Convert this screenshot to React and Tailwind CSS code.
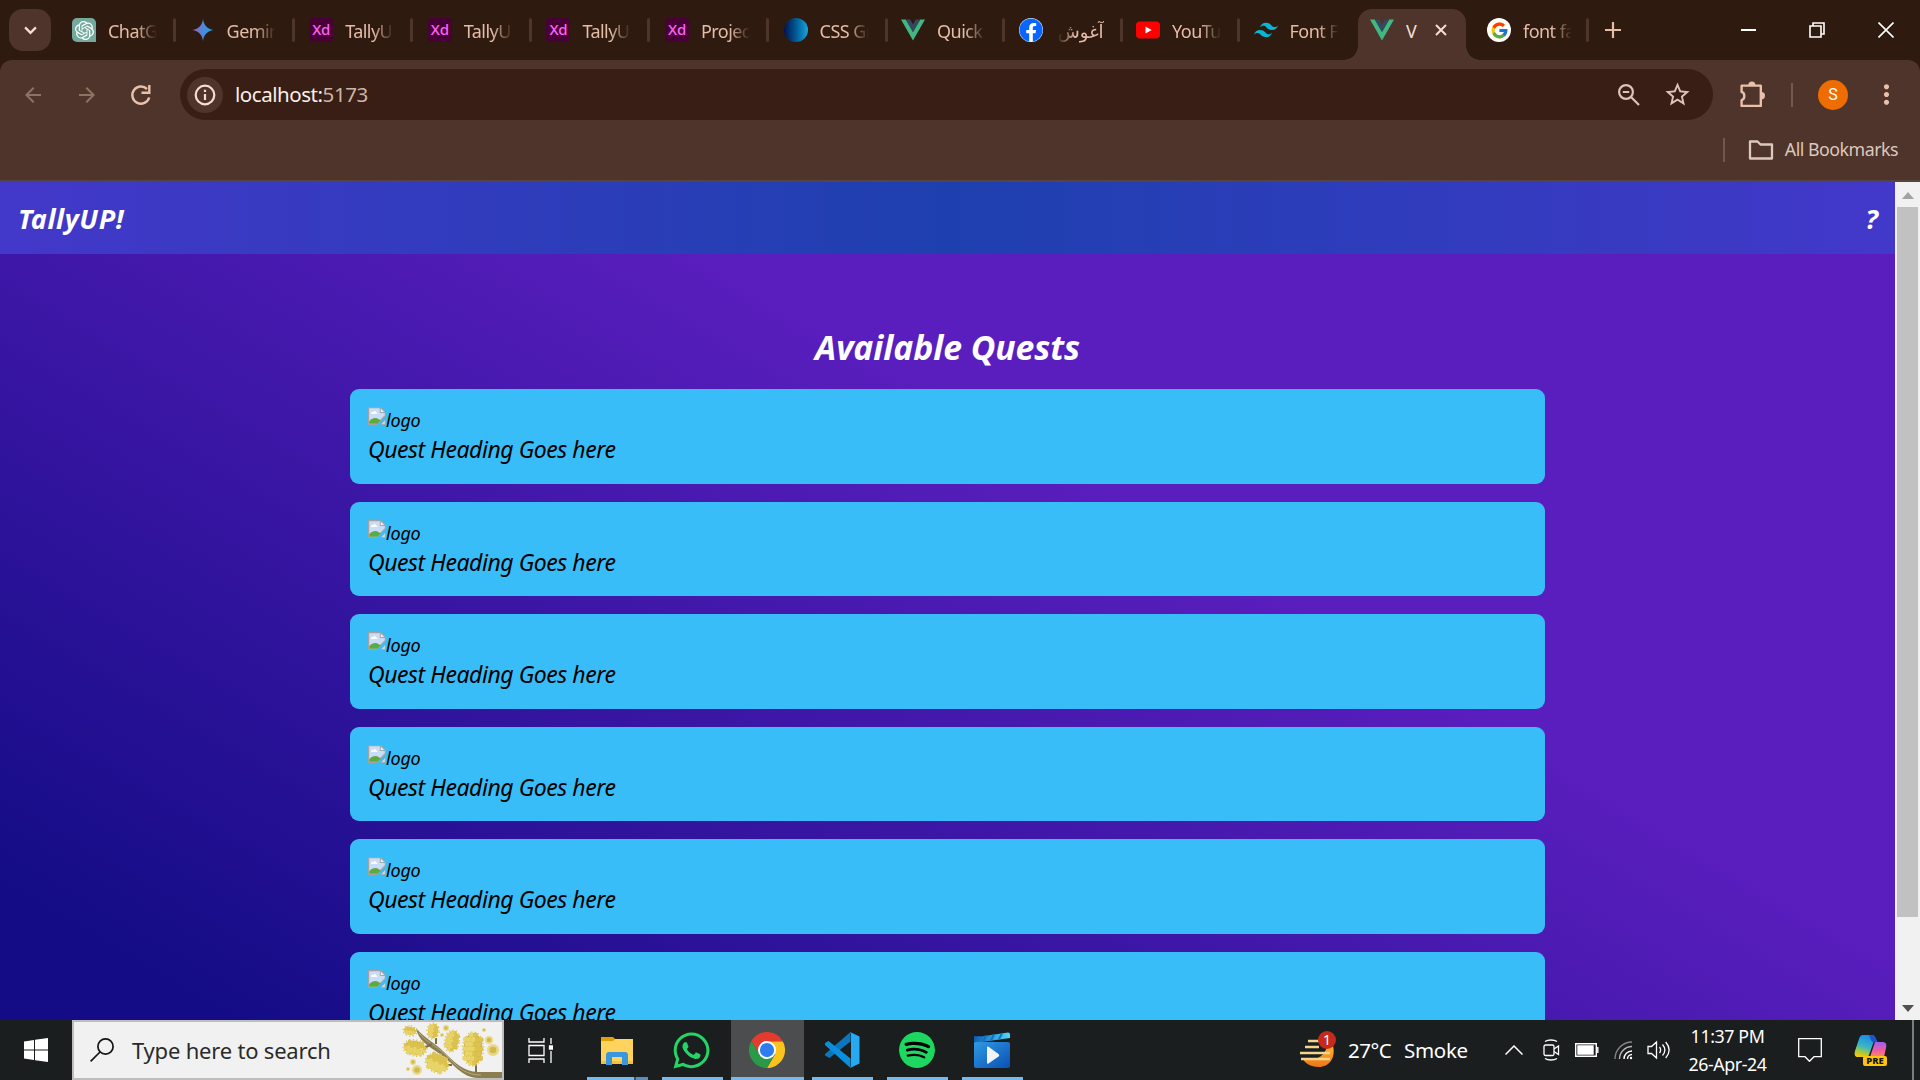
import React from "react";
import { MdArrowBack, MdArrowForward, MdStarBorder, MdMoreVert } from "react-icons/md";
import { SiOpenai, SiTailwindcss, SiSpotify } from "react-icons/si";
import { FaWhatsapp, FaFacebook } from "react-icons/fa";
import { FcGoogle } from "react-icons/fc";

const Vue = () => (
  <svg viewBox="0 0 24 24" className="size-6">
    <path fill="#41b883" d="M0 1.6h4.8L12 14 19.200 1.6H24L12 22.400z" />
    <path fill="#35495e" d="M4.800 1.600h4.400L12 6.400l2.800-4.800h4.400L12 14z" />
  </svg>
);

const Xd = () => (
  <span className="grid size-6 place-items-center rounded-[4px] bg-[#470137] pb-px font-['Noto_Sans'] text-[15px] leading-none font-medium tracking-[-0.300px] text-[#ff61f6]">
    Xd
  </span>
);

const Gemini = () => (
  <svg viewBox="0 0 24 24" className="size-6">
    <defs>
      <linearGradient id="gem" x1="0" x2="1">
        <stop offset="0.1" stopColor="#9168c0" />
        <stop offset="0.5" stopColor="#4d88dc" />
        <stop offset="0.9" stopColor="#1ba1e3" />
      </linearGradient>
    </defs>
    <path fill="url(#gem)" d="M12 1c.8 6.200 4.500 10.200 10.500 11-6 .8-9.700 4.800-10.500 11-.8-6.200-4.500-10.200-10.500-11C7.500 11.200 11.200 7.200 12 1z" />
  </svg>
);

const YouTube = () => (
  <svg viewBox="0 0 24 24" className="size-6">
    <rect y="3.500" width="24" height="17" rx="4" fill="#f00" />
    <path fill="#fff" d="M9.500 8.500v7l6.200-3.500z" />
  </svg>
);

const tabs = [
  { label: "ChatGPT", icon: <span className="grid size-6 place-items-center rounded-[5px] rounded-br-none bg-[#74aa9c]"><SiOpenai className="size-[19px] text-white" /></span> },
  { label: "Gemini", icon: <Gemini /> },
  { label: "TallyUP", icon: <Xd /> },
  { label: "TallyUP", icon: <Xd /> },
  { label: "TallyUP", icon: <Xd /> },
  { label: "Project", icon: <Xd /> },
  { label: "CSS Gr", icon: <span className="size-6 rounded-full bg-linear-to-r from-[#04114f] to-[#1aa6dc]" /> },
  { label: "Quick S", icon: <Vue /> },
  { label: "آغوش را", rtl: true, icon: <span className="grid size-6 place-items-center rounded-full bg-white"><FaFacebook className="size-6 text-[#0866ff]" /></span> },
  { label: "YouTube", icon: <YouTube /> },
  { label: "Font Fa", icon: <SiTailwindcss className="size-6 text-[#06b6d4]" />, last: true },
];

const TabLabel = ({ children, rtl }) => (
  <span
    dir={rtl ? "rtl" : "ltr"}
    className={
      rtl
        ? "mt-[2px] ml-[14px] w-[47px] overflow-hidden text-[18px] leading-[30px] whitespace-nowrap [mask-image:linear-gradient(to_left,black_60%,transparent)]"
        : "mt-[2px] ml-3 w-[49px] overflow-hidden text-[18px] leading-[30px] tracking-[-0.55px] whitespace-nowrap [mask-image:linear-gradient(to_right,black_58%,transparent)]"
    }
  >
    {children}
  </span>
);

const TabStrip = () => (
  <div className="flex h-[60px] shrink-0 items-start bg-[#2f1a0f] pl-[9px] text-[#e4bda8]">
    <div className="mt-[9px] mr-[21px] grid h-[42px] w-[42px] shrink-0 place-items-center rounded-[14px] bg-[#4e342a]">
      <svg viewBox="0 0 14 10" className="h-[9px] w-[13px]" fill="none" stroke="#f3ded4" strokeWidth="2.600"><path d="M1 1.500l6 6 6-6" /></svg>
    </div>
    {tabs.map((t, i) => (
      <div key={i} className={i < 6 ? "flex h-[60px] w-[118.600px] shrink-0 items-center" : "flex h-[60px] w-[117.500px] shrink-0 items-center"}>
        {t.icon}
        <TabLabel rtl={t.rtl}>{t.label}</TabLabel>
        {!t.last && <span className="ml-4 h-6 w-[3px] rounded bg-[#4e342a]" />}
      </div>
    ))}
    <div className="relative -ml-[13px] mt-[9px] flex h-[51px] w-[108px] shrink-0 items-center rounded-t-[14px] bg-[#4e342a] pb-[9px] pl-3 text-[#f3ded4] before:absolute before:bottom-0 before:-left-[14px] before:size-[14px] before:bg-[radial-gradient(circle_at_0_0,transparent_13.500px,#4e342a_14px)] after:absolute after:-right-[14px] after:bottom-0 after:size-[14px] after:bg-[radial-gradient(circle_at_100%_0,transparent_13.500px,#4e342a_14px)]">
      <Vue />
      <span className="mt-[2px] ml-3 w-7 text-[18px] leading-[30px]">V</span>
      <svg viewBox="0 0 12 12" className="ml-[1px] size-3" stroke="#f3ded4" strokeWidth="2"><path d="M1 1l10 10M11 1L1 11" /></svg>
    </div>
    <div className="ml-[21px] flex h-[60px] items-center">
      <span className="grid size-6 place-items-center rounded-full bg-white"><FcGoogle className="size-[19px]" /></span>
      <TabLabel>font fam</TabLabel>
      <span className="ml-[14px] h-6 w-[3px] rounded bg-[#4e342a]" />
      <svg viewBox="0 0 16 16" className="ml-4 size-4" stroke="#e4bda8" strokeWidth="2.200"><path d="M8 0v16M0 8h16" /></svg>
    </div>
    <div className="mr-[26px] ml-auto flex h-[59px] items-center gap-[53px]">
      <span className="h-[2px] w-[15px] bg-white" />
      <svg viewBox="0 0 16 16" className="size-4" fill="none" stroke="#fff" strokeWidth="1.600"><path d="M1 4h11v11H1zM4 4V1h11v11h-3" /></svg>
      <svg viewBox="0 0 16 16" className="size-4" stroke="#fff" strokeWidth="1.600"><path d="M.5.5l15 15M15.500.5l-15 15" /></svg>
    </div>
  </div>
);

const Toolbar = () => (
  <div className="bg-[#2f1a0f]">
    <div className="flex h-[120px] flex-col rounded-t-[12px] bg-[#4e342a]">
      <div className="mt-[9px] flex h-[51px] items-center pl-[21px]">
        <MdArrowBack className="size-6 text-[#8f7266]" />
        <MdArrowForward className="ml-[30px] size-6 text-[#8f7266]" />
        <svg viewBox="0 0 24 24" className="ml-[30px] size-6" fill="none" stroke="#e9c0ab" strokeWidth="2.500">
          <path d="M20.200 14.500A8.600 8.600 0 1 1 18 6" /><path fill="#e9c0ab" stroke="none" d="M21.500 2v9h-9v-2.400h6.600V2z" />
        </svg>
        <div className="ml-[27px] flex h-[51px] w-[1533px] items-center rounded-full bg-[#381e14] pl-2">
          <span className="-ml-px grid size-9 place-items-center rounded-full bg-[#4e342a]">
            <svg viewBox="0 0 22 22" className="size-[22px]" fill="none" stroke="#f3ded4" strokeWidth="2.200"><circle cx="11" cy="11" r="9.300" /><path d="M11 10v6M11 5.800v2.300" /></svg>
          </span>
          <span className="ml-3 text-[20.500px] tracking-[-0.450px] text-[#fbeee8]">localhost:<span className="text-[#cdb5a5]">5173</span></span>
          <svg viewBox="0 0 24 24" className="mr-[22px] ml-auto size-6" fill="none" stroke="#dcc3b8" strokeWidth="2.200"><circle cx="9" cy="9" r="6.900" /><path d="M14 14l8 8M5.800 9h6.400" /></svg>
          <MdStarBorder className="mr-[21px] size-[29px] text-[#dcc3b8]" />
        </div>
        <svg viewBox="0 0 26 26" className="ml-[26px] size-[27px]" fill="none" stroke="#e9c0ab" strokeWidth="2.300" strokeLinejoin="round">
          <path d="M2.500 4.500H21V24H2.500V18.500C6 17.500 6 11.500 2.500 10.500z" />
          <path fill="#e9c0ab" stroke="none" d="M9 4a3.400 3.400 0 0 1 6.800 0zM21.500 10.600a3.500 3.500 0 0 1 0 7z" />
        </svg>
        <span className="ml-[25px] h-6 w-[2px] bg-[#76574b]" />
        <span className="ml-[25px] grid size-[30px] place-items-center rounded-full bg-[#ef6c00] font-[Roboto] text-[16px] text-white">S</span>
        <MdMoreVert className="ml-[23px] size-[31px] text-[#e9c0ab]" />
      </div>
      <div className="flex h-[60px] items-center justify-end pr-[22px]">
        <span className="h-6 w-[2px] bg-[#76574b]" />
        <svg viewBox="0 0 26 20" className="ml-[23px] h-5 w-[26px]" fill="none" stroke="#dcc8be" strokeWidth="2.300" strokeLinejoin="round"><path d="M2 1.500h7.500l3 3H24V18.500H2z" /></svg>
        <span className="-mt-px ml-[11px] text-[17.800px] tracking-[-0.500px] text-[#dcc8be]">All Bookmarks</span>
      </div>
    </div>
    <div className="h-[2px] bg-[#56443d]" />
  </div>
);

const BrokenImage = () => (
  <svg viewBox="0 0 18 18" className="size-[18px]">
    <path fill="#c9dcf8" stroke="#a3a3a3" strokeWidth="1.200" d="M.6.6h11.900l4.900 4.900v3L8.500 17.400H.6z" />
    <path fill="#fff" d="M3 6.500c0-1.500 1.500-2 2.200-1.400C6 3.200 8.400 4 8.300 5.600c1.200 0 1.200 1.300.4 1.400H3.300z" />
    <path fill="#5bab3f" d="M1.200 16.800v-2.500C4 11 8 10 10.800 12.200l2 1L9 16.800z" />
    <path fill="#f5f5f5" stroke="#a3a3a3" d="M12.300.8v4.700h4.900z" />
    <path fill="#d5d9e2" stroke="#a3a3a3" strokeWidth=".8" d="M17.300 12.500v4.900h-4.500z" />
  </svg>
);

const Page = () => (
  <div className="flex h-[838px] shrink-0 overflow-hidden italic">
    <div className="flex w-[1895px] flex-col">
      <header className="flex h-[72px] shrink-0 items-center justify-between bg-[linear-gradient(to_right,#4338ca,#1e40af,#4338ca)] pt-[2px] pr-[17px] pl-[18px] text-[27px] font-bold text-white">
        <h1 className="tracking-[0.600px]">TallyUP!</h1>
        <span>?</span>
      </header>
      <main className="flex h-[766px] flex-col items-center overflow-hidden bg-[linear-gradient(30.500deg,#140c86_7.300%,#5a1ebe_63.400%)] pt-[70px]">
        <h2 className="h-[65px] shrink-0 text-[33.750px] leading-[46px] font-bold tracking-[-0.070px] whitespace-nowrap text-white">Available Quests</h2>
        <ul className="flex w-[1195px] flex-col gap-[18.100px]">
          {[1, 2, 3, 4, 5, 6].map((n) => (
            <li key={n} className="h-[94.500px] shrink-0 rounded-[9px] bg-[#38bdf8] px-[18px] pt-[18px] text-black">
              <div className="flex h-[27px] items-start">
                <BrokenImage />
                <span className="text-[18px] leading-[27px] tracking-[-0.200px]">logo</span>
              </div>
              <p className="text-[23px] leading-[31px] tracking-[-0.450px]">Quest Heading Goes here</p>
            </li>
          ))}
        </ul>
      </main>
    </div>
    <div className="flex w-[25px] flex-col items-center bg-[#f1f1f1]">
      <svg viewBox="0 0 12 7" className="mt-[10px] mb-2 h-[7px] w-3 shrink-0" fill="#a3a3a3"><path d="M0 7l6-7 6 7z" /></svg>
      <div className="h-[710px] w-[21px] bg-[#c1c1c1]" />
      <svg viewBox="0 0 12 7" className="mt-[88px] h-[7px] w-3 shrink-0" fill="#505050"><path d="M0 0l6 7 6-7z" /></svg>
    </div>
  </div>
);

const Cluster = ({ x, y, rx, ry, rot = 0 }) => {
  const dots = [];
  for (let r = -3; r <= 3; r++)
    for (let c = -2; c <= 2; c++) {
      const u = (c + (r % 2 ? 0.5 : 0)) / 2.4, v = r / 3.4;
      if (u * u + v * v < 1.05) dots.push([u * rx, v * ry]);
    }
  return (
    <g transform={`translate(${x} ${y}) rotate(${rot})`}>
      <ellipse rx={rx} ry={ry} fill="#d0b440" />
      <ellipse rx={rx + 1} ry={ry + 1} fill="none" stroke="#d8bd4c" strokeDasharray="1 2.500" strokeWidth="1.500" />
      {dots.map(([a, b], i) => <circle key={i} cx={a} cy={b} r={rx / 3.8} fill={a > 0 ? "#dcc24e" : "#e8d468"} />)}
    </g>
  );
};

const Branch = () => (
  <svg viewBox="0 0 104 56" className="h-14 w-[104px] self-end">
    <g transform="translate(4 0)">
      <path d="M14 6c2 12 12 18 24 26s22 24 38 24h28v-6H76C62 50 52 40 42 30S22 16 14 6z" fill="#8c7d50" />
      <path d="M17 11c8 10 20 14 30 25s18 17 32 17" stroke="#b8ab7c" fill="none" />
      <path d="M30 22l-8 4M34 16v6M48 28l3-6M50 43l-10 0M74 50v-8M14 10l-6-3" stroke="#7d6d45" strokeWidth="2" />
      <Cluster x={8} y={9} rx={4} ry={6} rot={-80} />
      <Cluster x={31} y={9} rx={5} ry={7} rot={8} />
      <Cluster x={13} y={26} rx={7} ry={11} rot={-80} />
      <Cluster x={50} y={19} rx={6.500} ry={10} rot={12} />
      <Cluster x={35} y={41} rx={8.500} ry={11} rot={-65} />
      <Cluster x={71} y={27} rx={9.500} ry={16} rot={2} />
      {[[44, 6, 3], [82, 8, 2], [87, 18, 4], [91, 28, 6], [11, 40, 3], [15, 48, 5], [6, 47, 2], [40, 13, 2]].map(([x, y, r], i) => (
        <g key={i}><circle cx={x} cy={y} r={r} fill="#e8d88a" /><circle cx={x} cy={y} r={r * 0.55} fill="#d3b94a" /></g>
      ))}
    </g>
  </svg>
);

const Explorer = () => (
  <svg viewBox="0 0 36 36" className="size-9">
    <path fill="#e0a008" d="M2 5h12l2 2v4H2z" /><path fill="#ffd35c" d="M2 9h12l2-2h18v25H2z" /><path fill="#f7bf3a" d="M2 29h32v3H2z" />
    <path fill="#3a96dd" d="M10 20h16a3 3 0 0 1 3 3v10h-6v-8H13v8H7V23a3 3 0 0 1 3-3z" />
  </svg>
);
const Chrome = () => (
  <svg viewBox="0 0 48 48" className="size-9">
    <path fill="#e33b2e" d="M3.200 12L14 30 24 12.500h21.100L44.800 12A24 24 0 0 0 3.200 12z" />
    <path fill="#fcc31e" d="M24 12.500h21.100A24 24 0 0 1 24 48l10.500-18z" />
    <path fill="#2a9a48" d="M3.200 12A24 24 0 0 0 24 48l10.400-18H14z" />
    <circle cx="24" cy="24" r="12" fill="#fff" /><circle cx="24" cy="24" r="9.500" fill="#2f7cf0" />
  </svg>
);
const VsCode = () => (
  <svg viewBox="0 0 36 36" className="size-9">
    <path fill="#0b76bd" d="M26.500 0v9.500L5.500 26 1 23.500V22z" />
    <path fill="#0b8fdd" d="M4.500 9L1 11v2l25.500 23V26.500z" />
    <path fill="#27a9f2" d="M26 0l9.500 4.500v27L26 36l1-1.500v-33z" />
  </svg>
);
const Movies = () => (
  <svg viewBox="0 0 36 36" className="size-9">
    <defs>
      <linearGradient id="mv" x1="0" y1="0" x2="1" y2="1"><stop offset="0" stopColor="#2f9be4" /><stop offset="1" stopColor="#0a50b4" /></linearGradient>
      <linearGradient id="mt" x1="0" x2="1"><stop offset="0" stopColor="#0f5fb5" /><stop offset="1" stopColor="#50d8ff" /></linearGradient>
    </defs>
    <path fill="#0d55a8" d="M0 4h7l-3 12H0z" /><path fill="url(#mt)" d="M0 5.500L34 .5a2 2 0 0 1 2 2V6L4 10.500 0 15z" />
    <path d="M12 3.500L9 9.500M20 2.300L17 8.500M28 1.200L25 7.200" stroke="#1272c4" strokeWidth="2" />
    <rect y="10" width="36" height="26" rx="2" fill="url(#mv)" /><path fill="#f4f4f4" d="M13 15.500a1 1 0 0 1 1.500-.8l10 7.400a1.500 1.500 0 0 1 0 2.400l-10 7a1 1 0 0 1-1.500-.8z" />
  </svg>
);

const apps = [
  { icon: <Explorer />, cls: "w-[61px] mx-[7px]", split: true },
  { icon: <FaWhatsapp className="size-[41px] text-[#25d366]" />, cls: "w-[61px] mx-[7px]" },
  { icon: <Chrome />, cls: "w-[73px] mx-px bg-[#4b4d4e]" },
  { icon: <VsCode />, cls: "w-[61px] mx-[7px]" },
  { icon: <span className="grid size-9 place-items-center rounded-full bg-black"><SiSpotify className="size-9 text-[#1ed760]" /></span>, cls: "w-[61px] mx-[7px]" },
  { icon: <Movies />, cls: "w-[61px] mx-[7px]" },
];

const Taskbar = () => (
  <div className="flex h-[60px] shrink-0 bg-[#1b1e1f] text-white">
    <div className="grid w-[72px] place-items-center">
      <svg viewBox="0 0 24 24" className="size-6" fill="#fff"><path d="M0 3.400l10-1.400v9.500H0zM11 1.800L24 0v11.500H11zM0 12.500h10V22L0 20.600zM11 12.500h13V24l-13-1.800z" /></svg>
    </div>
    <div className="flex w-[432px] items-center border-2 border-[#bdbdbd] bg-[#f1f1f1] pl-4">
      <svg viewBox="0 0 24 24" className="size-6" fill="none" stroke="#151515" strokeWidth="1.700"><circle cx="15.500" cy="8.500" r="7.600" /><path d="M10 14L.6 23.400" /></svg>
      <span className="mt-px ml-[18px] text-[22px] tracking-[-0.200px] whitespace-nowrap text-[#2a2a2a]">Type here to search</span>
      <div className="ml-auto flex h-full"><Branch /></div>
    </div>
    <div className="grid w-[76px] place-items-center pr-1">
      <svg viewBox="0 0 25 25" className="size-[25px]" fill="none" stroke="#fff" strokeWidth="1.300"><path d="M1 7.500h15v10H1zM1 0v4h15V0M1 25v-4h15v4M23 0v6M23 13v12" /><path fill="#fff" d="M21.500 8h3v3h-3z" /></svg>
    </div>
    <div className="flex">
      {apps.map((a, i) => (
        <div key={i} className={`flex flex-col items-center ${a.cls}`}>
          <div className="flex h-[57px] items-center pt-[3px] pr-[2px]">{a.icon}</div>
          <div className="flex h-[3px] w-full bg-[#76b9ed]">{a.split && <span className="ml-auto w-[14px] border-l-2 border-[#35536b] bg-[#5b8fb9]" />}</div>
        </div>
      ))}
    </div>
    <div className="ml-auto flex items-center">
      <div className="relative h-9 w-9">
        <svg viewBox="0 0 36 36" className="size-9">
          <defs><linearGradient id="wx" x1="0" y1="0" x2="0" y2="1"><stop offset="0" stopColor="#f9b52c" /><stop offset="1" stopColor="#ee7417" /></linearGradient></defs>
          <path fill="url(#wx)" d="M33 14c3 12-4 21-14 21C10 35 5 31 3 27c12 2 22-2 24-13z" />
          <path d="M8 9h11M5 15h14M0 21h30M1 27h29" stroke="#f2d58d" strokeWidth="2.600" />
        </svg>
        <span className="absolute -top-px right-0 grid size-[18px] place-items-center rounded-full bg-[#c42b1c] text-[14px] leading-none">1</span>
      </div>
      <span className="mt-px ml-3 w-[56px] text-[20.500px] tracking-[-0.500px]">27°C</span>
      <span className="mt-px w-[101px] text-[20.500px] tracking-[-0.300px]">Smoke</span>
      <svg viewBox="0 0 18 10" className="h-[10px] w-[18px]" fill="none" stroke="#fff" strokeWidth="1.500"><path d="M.5 9.500L9 1l8.500 8.500" /></svg>
      <svg viewBox="0 0 17 22" className="ml-5 h-[22px] w-[17px]" fill="none" stroke="#fff" strokeWidth="1.300"><rect x="1" y="6" width="10" height="10.500" rx="1.500" /><path d="M11 10l4.500-3v8.500l-4.500-3M2 2.500c3-2 9-2 12 0M2 19.500c3 2 9 2 12 0" /></svg>
      <svg viewBox="0 0 24 14" className="ml-[15px] h-[14px] w-6" fill="none" stroke="#fff" strokeWidth="1.400"><path d="M.7.7h20.600v12.600H.7z" /><path fill="#fff" d="M3 3h15v8H3z" /><path d="M22.800 4v6" /></svg>
      <svg viewBox="0 0 19 19" className="ml-[15px] size-[19px]" fill="none" stroke="#fff" strokeWidth="1.400"><path stroke="#858787" d="M1 18A17 17 0 0 1 18 1" /><path stroke="#b8baba" d="M5.500 18A12.500 12.500 0 0 1 18 5.500" /><path d="M10 18a8 8 0 0 1 8-8" /><path d="M13.500 18a4.500 4.500 0 0 1 4.500-4.500" /><circle cx="17" cy="17" r="1.200" fill="#fff" stroke="none" /></svg>
      <svg viewBox="0 0 23 20" className="ml-[14px] h-5 w-[23px]" fill="none" stroke="#fff" strokeWidth="1.300"><path d="M1 6.500h3.500L9.500 2v16L4.500 13.500H1zM12.500 7c1.500 2 1.500 4 0 6M15.500 4.500c3 3.500 3 7.500 0 11M18.700 2c4.300 5 4.300 11 0 16" /></svg>
      <div className="ml-[15px] flex w-[85px] flex-col items-center text-[17.800px] leading-[28px] tracking-[-0.400px] whitespace-nowrap"><span>11:37 PM</span><span>26-Apr-24</span></div>
      <svg viewBox="0 0 24 24" className="ml-[28px] size-6" fill="none" stroke="#fff" strokeWidth="1.300"><path d="M.7.7h22.600v18H16l-4.500 4.600L7 18.700H.7z" /></svg>
      <svg viewBox="0 0 33 31" className="ml-[32px] h-[31px] w-[33px]">
        <defs>
          <linearGradient id="c1" x1="0.500" y1="0" x2="0.200" y2="1"><stop offset="0" stopColor="#1b8ee8" /><stop offset="0.500" stopColor="#3bb8c0" /><stop offset="0.750" stopColor="#a8c840" /><stop offset="1" stopColor="#ffc800" /></linearGradient>
          <linearGradient id="c2" x1="0.500" y1="0" x2="0.500" y2="1"><stop offset="0" stopColor="#a35cf0" /><stop offset="0.600" stopColor="#f0609c" /><stop offset="1" stopColor="#fa8f5a" /></linearGradient>
        </defs>
        <path fill="url(#c1)" d="M9 0h9c3 0 3 3 2 6l-5 14c-1 2-2 2-4 2H4c-3 0-4-2-3-6L5 4c1-3 2-4 4-4z" />
        <path fill="#1f55c8" d="M15 0h3c4 0 4 5 6 7h-5c-2 0-3-5-4-7z" />
        <path fill="url(#c2)" d="M21 7h7c4 0 5 2 4 6l-2 9H16z" />
        <rect x="9" y="21" width="24" height="10" rx="2" fill="#ffc40c" />
        <text x="21" y="29.300" textAnchor="middle" fontSize="9.500" fontWeight="800" fontStyle="normal" fontFamily="Noto Sans" fill="#111">PRE</text>
      </svg>
      <span className="ml-[25px] h-[60px] w-[2px] bg-[#7b7d7e]" />
      <span className="w-[6px]" />
    </div>
  </div>
);

export default function App() {
  return (
    <div className="flex h-[1080px] w-[1920px] flex-col overflow-hidden bg-[#2f1a0f] font-['Noto_Sans','DejaVu_Sans',sans-serif]">
      <TabStrip />
      <Toolbar />
      <Page />
      <Taskbar />
    </div>
  );
}
